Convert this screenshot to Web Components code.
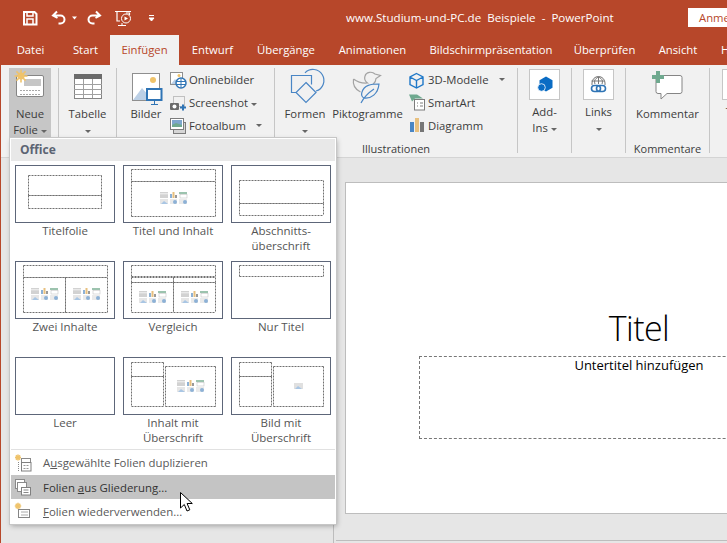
<!DOCTYPE html>
<html lang="de">
<head>
<meta charset="utf-8">
<title>PowerPoint</title>
<style>
  html, body { margin: 0; height: 100%; overflow: hidden; background: #e6e6e6; }
  body { font: 11.3px "Open Sans", "Noto Sans", sans-serif; }
</style>
</head>
<body>
<ppt-app>
  <ppt-titlebar></ppt-titlebar>
  <ppt-tabs></ppt-tabs>
  <ppt-ribbon>
    <rb-group style="width:49px;padding-left:9px">
      <rb-big icon="neue" active style="width:42px">Neue<br>Folie <rb-caret></rb-caret></rb-big>
    </rb-group>
    <rb-group style="width:57px">
      <rb-big icon="table" style="width:57px">Tabelle<br><rb-caret></rb-caret></rb-big>
    </rb-group>
    <rb-group style="width:148px;padding-left:9px">
      <rb-big icon="bilder" style="width:40px">Bilder</rb-big>
      <rb-col style="margin-left:3px">
        <rb-small icon="online" style="width:93px">Onlinebilder</rb-small>
        <rb-small icon="screenshot" style="width:93px">Screenshot <rb-caret></rb-caret></rb-small>
        <rb-small icon="album" caret style="width:93px">Fotoalbum</rb-small>
      </rb-col>
    </rb-group>
    <rb-group label="Illustrationen" style="width:236px;padding-left:6px">
      <rb-big icon="formen" style="width:48px">Formen<br><rb-caret></rb-caret></rb-big>
      <rb-big icon="pikto" style="width:73px;margin-left:2px">Piktogramme</rb-big>
      <rb-col style="margin-left:3px;--gap:3px">
        <rb-small icon="cube" caret style="width:98px">3D-Modelle</rb-small>
        <rb-small icon="smartart" style="width:98px">SmartArt</rb-small>
        <rb-small icon="chart" style="width:98px">Diagramm</rb-small>
      </rb-col>
    </rb-group>
    <rb-group style="width:53px">
      <rb-big icon="addin" h="36" style="width:53px">Add-<br>Ins <rb-caret></rb-caret></rb-big>
    </rb-group>
    <rb-group style="width:53px">
      <rb-big icon="links" h="36" style="width:53px">Links<br><rb-caret></rb-caret></rb-big>
    </rb-group>
    <rb-group label="Kommentare" style="width:83px">
      <rb-big icon="komment" style="width:83px">Kommentar</rb-big>
    </rb-group>
    <rb-group style="width:40px;padding-left:12px;border:0">
      <rb-big icon="textbox" h="36" style="width:30px">Text</rb-big>
    </rb-group>
  </ppt-ribbon>
  <ppt-workspace>
    <ppt-slide>
      <span slot="title">Titel</span>
      <span slot="subtitle">Untertitel hinzufügen</span>
    </ppt-slide>
  </ppt-workspace>
  <layout-menu>
    <layout-thumb kind="title">Titelfolie</layout-thumb>
    <layout-thumb kind="content">Titel und Inhalt</layout-thumb>
    <layout-thumb kind="section">Abschnitts-<br>überschrift</layout-thumb>
    <layout-thumb kind="two">Zwei Inhalte</layout-thumb>
    <layout-thumb kind="compare">Vergleich</layout-thumb>
    <layout-thumb kind="only">Nur Titel</layout-thumb>
    <layout-thumb kind="blank">Leer</layout-thumb>
    <layout-thumb kind="caption">Inhalt mit<br>Überschrift</layout-thumb>
    <layout-thumb kind="picture">Bild mit<br>Überschrift</layout-thumb>
    <menu-row slot="rows" icon="dup">A<u>u</u>sgewählte Folien duplizieren</menu-row>
    <menu-row slot="rows" icon="outline" hover>Folien <u>a</u>us Gliederung...</menu-row>
    <menu-row slot="rows" icon="reuse"><u>F</u>olien wiederverwenden...</menu-row>
  </layout-menu>
  <ppt-cursor></ppt-cursor>
</ppt-app>

<script>
const BLUE = '#4a86c5', DARK_BLUE = '#2f74b5', GREEN = '#6fa98f', SUN = '#efc36b';

// little sun that marks a "new" icon
function sun(cx, cy, r) {
  let rays = '';
  for (let a = 0; a < 8; a++) {
    const t = a * Math.PI / 4;
    rays += `<line x1="${cx}" y1="${cy}" x2="${cx + Math.cos(t) * r}" y2="${cy + Math.sin(t) * r}"/>`;
  }
  return `<g stroke="${SUN}" stroke-width="1.6">${rays}</g><circle cx="${cx}" cy="${cy}" r="${r * .55}" fill="${SUN}"/>`;
}

// [x, y, w, h, content]: the view box is the place of the icon on the page, or a local one for small icons
const ICONS = {
  neue: [9, 68, 42, 38, `<rect x="16.5" y="75.5" width="27" height="21" rx="1.5" fill="#fff" stroke="#858585"/>
    <rect x="24" y="79" width="17" height="7" fill="#c6c6c6"/>
    <path d="M20 90.5h20M20 94.5h20" stroke="#a8a8a8" stroke-dasharray="2 1"/>${sun(21, 76, 6.5)}`],
  table: [59, 68, 57, 38, `<rect x="74.5" y="74.5" width="27" height="24" fill="#fff" stroke="#858585"/>
    <rect x="74" y="74" width="28" height="5" fill="#6b6b6b"/>
    <path d="M74 84.5h28M74 89.5h28M74 94.5h28M83.5 79v19M92.5 79v19" stroke="#a0a0a0"/>`],
  bilder: [126, 68, 40, 38, `<rect x="132.5" y="73.5" width="27" height="27" fill="#fff" stroke="#8f8f8f"/>
    <path d="M133 100l9-12 8 9 3 3z" fill="#bcd0e6"/><circle cx="153" cy="80" r="3" fill="${SUN}"/>
    <rect x="147" y="89" width="14.5" height="11" fill="#fff" stroke="${DARK_BLUE}" stroke-width="2"/>
    <path d="M154.5 101v3M151 104.5h7" stroke="${DARK_BLUE}"/>`],
  online: [0, 0, 18, 18, `<rect x="1.5" y="1.5" width="12" height="12" fill="#fff" stroke="#8f8f8f"/>
    <path d="M2 13l4-5 4 5z" fill="#bcd0e6"/><circle cx="10" cy="4.5" r="1.5" fill="${SUN}"/>
    <circle cx="12" cy="12" r="5" fill="#fff" stroke="${DARK_BLUE}" stroke-width="1.5"/>
    <path d="M7.5 10.5h9M7.5 13.5h9M12 7.5v9" stroke="${DARK_BLUE}"/>`],
  screenshot: [0, 0, 18, 18, `<rect x="4.5" y="2.5" width="11" height="10" fill="none" stroke="#8f8f8f" stroke-dasharray="1 1"/>
    <rect x="1" y="9" width="9" height="7" rx="1" fill="#6b6b6b"/><circle cx="5.5" cy="12.5" r="2" fill="#fff"/>
    <path d="M11 13.5h6M14 10.5v6" stroke="${DARK_BLUE}" stroke-width="2"/>`],
  album: [0, 0, 18, 18, `<rect x="4.5" y="5.5" width="12" height="11" fill="#d6d6d6" stroke="#7c7c7c"/>
    <rect x="1.5" y="1.5" width="13" height="11" fill="#fff" stroke="#7c7c7c"/>
    <rect x="3" y="3" width="10" height="5" fill="#7ea6cd"/><path d="M3 8l4-2 6 2v2H3z" fill="${GREEN}"/>`],
  formen: [281, 68, 48, 38, `<path d="M305 72.8a11 11 0 1 1 11 18.2" fill="none" stroke="${BLUE}" stroke-width="1.2"/>
    <path d="M298 92.5h-6.500v-17h20v9" fill="none" stroke="${BLUE}" stroke-width="1.2"/>
    <path d="M306 82.5l10 10-10 10-10-10z" fill="#f1f1f1" stroke="${BLUE}" stroke-width="1.2"/>`],
  pikto: [331, 68, 73, 38, `<path d="M353.5 79c4 3 9 4.500 14 4-2-1.500-3.500-4-2.500-7 1-4 7-5 10-2l5.500 1.500-4.500 3c0 3-2 5-3 6 3 1 4.500 4 4 7M353.5 79c-1 6 1 10 7 13" fill="none" stroke="#a3a3a3" stroke-width="1.2"/>
    <path d="M379 84c-8 0-15 1-17 8-1 3 0 5 2 6 7 1 14-4 15-14zM361 103c3-6 7-10 13-14" fill="#f1f1f1" stroke="${BLUE}" stroke-width="1.2"/>`],
  cube: [0, 0, 18, 18, `<path d="M9.5 2.500l6.500 3.500v7.500l-6.500 3.500-6.500-3.500v-7.500zM3 6l6.500 3.500 6.500-3.500M9.500 9.500v7.500" fill="none" stroke="#1f78c8" stroke-width="1.4"/>`],
  smartart: [0, 0, 18, 18, `<path d="M2 .5h8l6 4h-8l-3 3z" fill="${GREEN}"/>
    <rect x="7.5" y="5.5" width="10" height="10.5" fill="#fff" stroke="#7c7c7c"/>
    <path d="M10 9h1M13 9h3M10 12h1M13 12h3" stroke="#7c7c7c"/>`],
  chart: [0, 0, 18, 18, `<rect x="3" y="5" width="4" height="10" fill="${BLUE}"/><rect x="8" y="1" width="4" height="14" fill="#e8c07f"/><rect x="13" y="5" width="4" height="10" fill="#767676"/>`],
  addin: [518, 68, 53, 36, `<rect x="529.5" y="69.5" width="30" height="30" fill="#fff" stroke="#c6c6c6"/>
    <path d="M546 76.500l6.500 3.700v7.600l-6.500 3.700-6.500-3.700v-7.600z" fill="#0a6cc4"/><circle cx="541.500" cy="87.500" r="3.800" fill="#0a6cc4" stroke="#fff" stroke-width=".8"/>`],
  links: [572, 68, 53, 36, `<rect x="583.5" y="69.5" width="30" height="30" fill="#fff" stroke="#c6c6c6"/>
    <path d="M592 85v-2a6.500 6.500 0 0 1 13 0v2M591.500 81h13M598.500 77v7M595 84c-1-3-.5-5 3.500-7 4 2 4.500 4 3.500 7" fill="none" stroke="#777"/>
    <rect x="591.500" y="85.500" width="9" height="6" rx="3" fill="none" stroke="${DARK_BLUE}" stroke-width="1.6"/>
    <rect x="596.500" y="85.500" width="9" height="6" rx="3" fill="none" stroke="${DARK_BLUE}" stroke-width="1.6"/>`],
  komment: [626, 68, 83, 38, `<path d="M658 75.5h22a2 2 0 0 1 2 2v14a2 2 0 0 1-2 2h-13l-6 5.500v-5.500h-3a2 2 0 0 1-2-2v-14a2 2 0 0 1 2-2z" fill="#fff" stroke="#858585"/>
    <path d="M652 77h12M658 71v12" stroke="${GREEN}" stroke-width="4"/>`],
  textbox: [722, 68, 30, 36, `<rect x="722.5" y="69.5" width="30" height="30" fill="#fff" stroke="#c6c6c6"/>`],
  dup: [0, 0, 18, 18, `${sun(4, 3.5, 3)}<path d="M4.500 8v9" stroke="#8a8a8a" stroke-dasharray="1 1"/>
    <rect x="7.5" y="4.5" width="9" height="6" fill="#fff" stroke="#8a8a8a"/>
    <rect x="7.5" y="8.5" width="9.5" height="8.5" fill="#fff" stroke="#808080"/>
    <path d="M9.500 11.500h6M9.500 14.500h6" stroke="#999" stroke-dasharray="2 1"/>`],
  outline: [0, 0, 18, 18, `<rect x="1.5" y="1.5" width="9" height="9" fill="#fff" stroke="#8a8a8a"/>
    <rect x="3.5" y="4.5" width="9" height="9" fill="#fff" stroke="#8a8a8a"/>
    <rect x="7.5" y="9.5" width="9" height="7.5" fill="#fff" stroke="#808080"/>
    <path d="M9.500 12h5M9.500 14.500h5" stroke="#888"/>`],
  reuse: [0, 0, 18, 18, `${sun(4, 4, 3.2)}<rect x="4.5" y="7.5" width="11" height="8" fill="#fff" stroke="#858585"/>
    <path d="M7 10h7M7 13h7" stroke="#aaa"/>`]
};

function icon(name, w, h) {
  const [x, y, vw, vh, body] = ICONS[name];
  return `<svg width="${w || vw}" height="${h || vh}" viewBox="${x} ${y} ${vw} ${vh}">${body}</svg>`;
}

// base for all elements: sets the shadow root once from render()
class PptElement extends HTMLElement {
  connectedCallback() {
    if (!this.shadowRoot) {
      this.attachShadow({ mode: 'open' });
      this.shadowRoot.innerHTML = this.render();
    }
  }
}

class PptApp extends PptElement {
  render() {
    return `<style>
      :host { display: flex; flex-direction: column; position: relative; width: 727px; height: 543px; overflow: hidden; }
      :host::after { content: ""; position: absolute; left: 0; top: 0; bottom: 0; width: 1px; background: #b7472a; }
    </style><slot></slot>`;
  }
}

class PptTitlebar extends PptElement {
  render() {
    return `<style>
      :host { display: flex; align-items: center; height: 35px; background: #b7472a; color: #fff; flex: none; }
      .qat { display: flex; align-items: center; width: 346px; flex: none; height: 100%; }
      svg { display: block; flex: none; }
      .title { width: 342px; font-size: 11.6px; white-space: pre; flex: none; }
      .login { background: #fff; color: #b7472a; height: 19px; line-height: 19px; padding-left: 11px; width: 60px; white-space: nowrap; overflow: hidden; flex: none; }
    </style>
    <div class="qat">
      <svg width="170" height="35" viewBox="0 0 170 35" fill="none" stroke="#fff">
        <path d="M24 12h10.500l2 2v10.500h-12.500z" stroke-width="2"/>
        <path d="M27 12.500v3.500h6v-3.500M27 24v-5h6v5" stroke-width="1.5"/>
        <path d="M57 11.500l-4 4 4.500 2.500M53.500 15.500h7a4 4 0 0 1 0 8h-2" stroke-width="2"/>
        <path d="M72 16.500h5l-2.500 3z" fill="#fff" stroke="none"/>
        <path d="M96 11.500l4 4-4.500 2.500M99.500 15.500h-7a4 4 0 0 0 0 8h2" stroke-width="2"/>
        <path d="M115 11.500h16M117 12v9h3M126 13h3.500v2" stroke-width="1.2"/>
        <circle cx="126" cy="18.5" r="4.5"/><path d="M124.500 16.500l3.500 2-3.500 2z" fill="#fff" stroke="none"/>
        <path d="M122 23v2.500M118 25.500h8" stroke-width="1"/>
        <path d="M149 15.500h5M149 18h5l-2.500 3z" fill="#fff"/>
      </svg>
    </div>
    <div class="title">www.Studium-und-PC.de  Beispiele  -  PowerPoint</div>
    <div class="login">Anmelden</div>`;
  }
}

class PptTabs extends PptElement {
  render() {
    const tabs = [['Datei', 61], ['Start', 49], ['Einfügen', 69], ['Entwurf', 67], ['Übergänge', 80],
      ['Animationen', 93], ['Bildschirmpräsentation', 144], ['Überprüfen', 83], ['Ansicht', 64]];
    const html = tabs.map(([name, w]) =>
      `<div class="tab${name === 'Einfügen' ? ' on' : ''}" style="width:${w}px">${name}</div>`).join('');
    return `<style>
      :host { display: flex; height: 30px; background: #b7472a; color: #fff; flex: none; white-space: nowrap; }
      .tab { text-align: center; line-height: 30px; flex: none; }
      .on { background: #f1f1f1; color: #b7472a; }
      .last { padding-left: 11px; line-height: 30px; }
    </style>${html}<div class="last">Hilfe</div>`;
  }
}

class PptRibbon extends PptElement {
  render() {
    return `<style>
      :host { display: flex; height: 89px; padding-top: 3px; background: #f1f1f1; border-bottom: 1px solid #d4d4d4; flex: none; overflow: hidden; }
    </style><slot></slot>`;
  }
}

class RbGroup extends PptElement {
  render() {
    const label = this.getAttribute('label') || '';
    return `<style>
      :host { display: block; height: 85px; border-right: 1px solid #c6c6c6; flex: none; position: relative; color: #3c3c3c; }
      .body { display: flex; height: 69px; }
      .label { position: absolute; left: 0; right: 0; top: 73px; text-align: center; line-height: 16px; font-size: 11px; white-space: nowrap; }
    </style><div class="body"><slot></slot></div><div class="label">${label}</div>`;
  }
}

class RbBig extends PptElement {
  render() {
    const h = this.getAttribute('h') || 38;
    return `<style>
      :host { display: block; height: 69px; text-align: center; line-height: 16px; flex: none; white-space: nowrap; }
      :host([active]) { background: #c6c6c6; }
      .icon { height: ${h}px; }
      svg { display: block; }
    </style><div class="icon">${icon(this.getAttribute('icon'))}</div><slot></slot>`;
  }
}

class RbCol extends PptElement {
  render() {
    return `<style>:host { display: flex; flex-direction: column; flex: none; }</style><slot></slot>`;
  }
}

class RbSmall extends PptElement {
  render() {
    const caret = this.hasAttribute('caret') ? '<rb-caret style="margin-left:auto"></rb-caret>' : '';
    return `<style>
      :host { display: flex; align-items: center; height: 23px; white-space: nowrap; }
      svg { display: block; flex: none; margin-right: var(--gap, 2px); }
    </style>${icon(this.getAttribute('icon'))}<span><slot></slot></span>${caret}`;
  }
}

class RbCaret extends PptElement {
  render() {
    return `<style>
      :host { display: inline-block; width: 0; height: 0; vertical-align: 1px; border: 3px solid transparent; border-top-color: #666; border-bottom-width: 0; }
    </style>`;
  }
}

class PptWorkspace extends PptElement {
  render() {
    return `<style>
      :host { display: flex; flex: 1; background: #e6e6e6; min-height: 0; }
      .panel { width: 333px; border-right: 1px solid #bdbdbd; flex: none; }
      .stage { flex: 1; min-width: 0; margin-left: 2px; display: flex; flex-direction: column; padding-top: 24px; box-sizing: border-box; }
      .slide { margin-left: 9px; flex: none; }
      .notes { margin-top: auto; margin-bottom: 2px; height: 1px; background: #bdbdbd; flex: none; }
    </style><div class="panel"></div><div class="stage"><div class="slide"><slot></slot></div><div class="notes"></div></div>`;
  }
}

class PptSlide extends PptElement {
  render() {
    return `<style>
      :host { display: flex; flex-direction: column; align-items: center; width: 588px; height: 332px; background: #fff; border: 1px solid #bdbdbd; box-sizing: border-box; color: #000; }
      .title { margin-top: 123px; height: 50px; line-height: 44px; font-size: 34px; font-weight: 300; letter-spacing: -.6px; }
      .sub { width: 441px; height: 83px; box-sizing: border-box; border: 1px dashed #777; text-align: center; font-size: 13px; line-height: 16px; }
    </style>
    <div class="title"><slot name="title"></slot></div>
    <div class="sub"><slot name="subtitle"></slot></div>`;
  }
}

// drop-down of the Neue Folie button, lies over the ribbon and the workspace
class LayoutMenu extends PptElement {
  render() {
    return `<style>
      :host { position: absolute; left: 10px; top: 138px; width: 324px; padding: 1px; background: #fff; box-shadow: 0 0 0 1px #c6c6c6, 1px 2px 5px rgba(0,0,0,.3); display: block; color: #555; }
      .head { height: 22px; line-height: 22px; background: #e8e8e8; padding-left: 9px; font-weight: 700; font-size: 12px; color: #5c6473; }
      .grid { display: grid; grid-template-columns: repeat(3, 100px); grid-template-rows: 96px 96px auto; column-gap: 8px; padding: 4px 0 0 4px; }
      hr { margin: 4px 0 0; border: 0; height: 1px; background: #e1e1e1; }
    </style>
    <div class="head">Office</div>
    <div class="grid"><slot></slot></div>
    <hr>
    <slot name="rows"></slot>`;
  }
}

class LayoutThumb extends PptElement {
  // dashed boxes of each layout [x, y, w, h] and the places of the content symbols
  static LAYOUTS = {
    title: { boxes: [[13, 10, 73, 20], [13, 30, 73, 13]] },
    content: { boxes: [[8, 4, 84, 12], [8, 16, 84, 35]], marks: [[37, 27]] },
    section: { boxes: [[8, 15, 84, 23], [8, 38, 84, 12]] },
    two: { boxes: [[8, 4, 84, 12], [8, 16, 42, 35], [50, 16, 42, 35]], marks: [[16, 27], [58, 27]] },
    compare: { boxes: [[8, 4, 84, 11], [8, 16, 42, 5], [50, 16, 42, 5], [8, 21, 42, 30], [50, 21, 42, 30]], marks: [[16, 30], [58, 30]] },
    only: { boxes: [[8, 4, 84, 11]] },
    blank: { boxes: [] },
    caption: { boxes: [[8, 5, 32, 14], [8, 19, 32, 30], [42, 9, 50, 40]], marks: [[54, 23]] },
    picture: { boxes: [[8, 5, 32, 14], [8, 19, 32, 30], [42, 9, 50, 40]], pic: [63, 26] }
  };

  static mark(x, y) {
    return `<g transform="translate(${x} ${y})">
      <rect width="8" height="6" fill="#d2d2d2"/><rect y="1.5" width="8" height=".7" fill="#fff"/>
      <rect x="10" y="2" width="2" height="4" fill="#8db1d6"/><rect x="12.5" y="0" width="2" height="6" fill="#e8c07f"/><rect x="15" y="3" width="2" height="3" fill="#999"/>
      <rect x="19" y="0" width="8" height="2" fill="#9cc3ae"/><rect x="20" y="2.5" width="7" height="3.5" fill="#fff" stroke="#bbb" stroke-width=".5"/>
      <rect y="7" width="8" height="5" fill="#e6e6e6"/><path d="M1 12l3-3 4 3z" fill="#a9c6e4"/>
      <rect x="10" y="7" width="7" height="5" fill="#eaeaea"/><circle cx="15" cy="10" r="2" fill="#8db1d6"/>
      <rect x="19" y="7" width="8" height="5" fill="#eaeaea"/><circle cx="25" cy="10" r="2" fill="#8db1d6"/>
    </g>`;
  }

  render() {
    const layout = LayoutThumb.LAYOUTS[this.getAttribute('kind')];
    // each side drawn on its own from left or top, so shared edges keep their dashes
    const boxes = layout.boxes.map(([x, y, w, h]) => {
      const l = x + .5, t = y + .5;
      return `<path d="M${l} ${t}h${w}M${l} ${t + h}h${w}M${l} ${t}v${h}M${l + w} ${t}v${h}"/>`;
    }).join('');
    const marks = (layout.marks || []).map(([x, y]) => LayoutThumb.mark(x, y)).join('');
    const pic = layout.pic
      ? `<rect x="${layout.pic[0]}" y="${layout.pic[1]}" width="9" height="6" fill="#e0e0e0"/><path d="M${layout.pic[0] + 1} ${layout.pic[1] + 6}l3-3 4 3z" fill="#a9c6e4"/>` : '';
    return `<style>
      :host { display: block; text-align: center; line-height: 15px; font-size: 11.5px; }
      .thumb { display: block; width: 100px; height: 58px; box-sizing: border-box; border: 1px solid #5d6679; background: #fff; }
      svg { display: block; margin: -1px; }
    </style>
    <div class="thumb"><svg width="100" height="58" viewBox="0 0 100 58"><g fill="none" stroke="#707070" stroke-dasharray="2 1">${boxes}</g>${marks}${pic}</svg></div>
    <slot></slot>`;
  }
}

class MenuRow extends PptElement {
  render() {
    return `<style>
      :host { display: flex; align-items: center; height: 24px; padding-left: 3px; color: #595959; white-space: nowrap; font-size: 11.4px; }
      :host(:first-of-type) { height: 25px; }
      :host([hover]) { background: #c4c4c4; color: #333; }
      svg { display: block; flex: none; margin-right: 11px; }
    </style>${icon(this.getAttribute('icon'))}<span><slot></slot></span>`;
  }
}

class PptCursor extends PptElement {
  render() {
    return `<style>
      :host { position: absolute; left: 180px; top: 492px; display: block; width: 14px; height: 20px; }
      svg { display: block; }
    </style>
    <svg width="14" height="20" viewBox="0 0 14 20"><path d="M.5.5v15.500l3.800-3.500 2.700 6.500 2.800-1.200-2.700-6.300h5.200z" fill="#fff" stroke="#000"/></svg>`;
  }
}

customElements.define('ppt-app', PptApp);
customElements.define('ppt-titlebar', PptTitlebar);
customElements.define('ppt-tabs', PptTabs);
customElements.define('ppt-ribbon', PptRibbon);
customElements.define('rb-group', RbGroup);
customElements.define('rb-big', RbBig);
customElements.define('rb-col', RbCol);
customElements.define('rb-small', RbSmall);
customElements.define('rb-caret', RbCaret);
customElements.define('ppt-workspace', PptWorkspace);
customElements.define('ppt-slide', PptSlide);
customElements.define('layout-menu', LayoutMenu);
customElements.define('layout-thumb', LayoutThumb);
customElements.define('menu-row', MenuRow);
customElements.define('ppt-cursor', PptCursor);
</script>
</body>
</html>
